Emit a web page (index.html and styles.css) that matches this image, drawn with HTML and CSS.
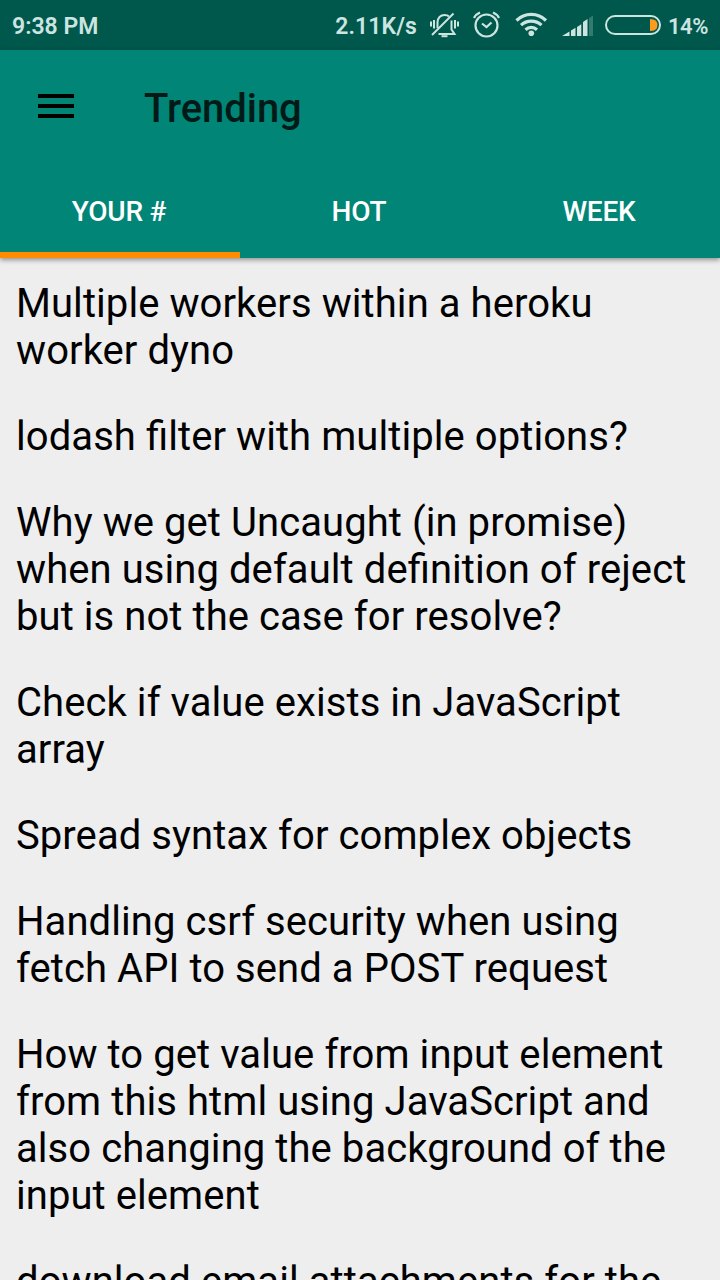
FILE: index.html
```html
<!DOCTYPE html>
<html lang="en">
<head>
<meta charset="utf-8">
<title>Trending</title>
<link rel="stylesheet" href="styles.css">
</head>
<body>
<div class="screen">
  <div class="status">
    <span class="clock">9:38 PM</span>
    <div class="indicators">
      <span class="speed">2.11K/s</span>
      <svg class="bell" width="32" height="30" viewBox="428 10 32 30" fill="none" stroke="currentColor" stroke-width="2">
        <path d="M431 21.500v5M434 20v8.500M455 20v8.500M458 21.500v5"/>
        <path d="M437.500 28V22.500c0-4.500 3-7.500 7-7.500 2 0 3.500.5 4.500 1.500M451.500 20.500v9l3 4.500H438.500"/>
        <path d="M432 35L453.500 13.500"/>
        <path d="M441.500 36.200h6"/>
      </svg>
      <svg class="alarm" width="28" height="30" viewBox="473 10 28 30" fill="none" stroke="currentColor" stroke-width="2.200">
        <circle cx="486.500" cy="25.500" r="11"/>
        <path d="M482 23.500l4.500 3.500 5-4.500M474 18q1.500-3.500 6-5.500M493 12.500q4.500 2 6 5.500"/>
      </svg>
      <svg class="wifi" width="34" height="26" viewBox="514 12 34 26" fill="none" stroke="currentColor" stroke-width="3.200">
        <path d="M516.500 20.500a21 21 0 0 1 29.500 0M521 25.200a15 15 0 0 1 20.500 0M525.500 29.700a8.500 8.500 0 0 1 11.500 0"/>
        <circle cx="531.300" cy="33.300" r="2.800" fill="currentColor" stroke="none"/>
      </svg>
      <svg class="signal" width="32" height="22" viewBox="561 15 32 22" fill="currentColor">
        <path d="M562 36l7.500-4.500V36zM571 30.500l4.500-2.700V36H571zM577 27l4.300-2.700V36H577zM583 22l4.500-3v17H583z"/>
        <path d="M589 18l4-2.500V36h-4z" opacity=".25"/>
      </svg>
      <svg class="battery" width="58" height="22" viewBox="604 14 58 22">
        <rect x="606" y="16" width="54" height="18" rx="9" fill="none" stroke="currentColor" stroke-width="2"/>
        <path d="M650 19q7.500 0 7.500 6t-7.500 6z" fill="#ff9a1c"/>
      </svg>
      <span class="percent">14%</span>
    </div>
  </div>
  <header class="appbar">
    <div class="toolbar">
      <svg class="menu" width="36" height="24" viewBox="0 0 36 24"><path d="M0 0h36v4H0zM0 10h36v4H0zM0 20h36v4H0z"/></svg>
      <h1 class="title">Trending</h1>
    </div>
    <nav class="tabs">
      <div class="tab active">YOUR #</div>
      <div class="tab">HOT</div>
      <div class="tab">WEEK</div>
    </nav>
  </header>
  <main class="list">
    <div class="item">Multiple workers within a heroku<br>worker dyno</div>
    <div class="item">lodash filter with multiple options?</div>
    <div class="item">Why we get Uncaught (in promise)<br>when using default definition of reject<br>but is not the case for resolve?</div>
    <div class="item">Check if value exists in JavaScript<br>array</div>
    <div class="item">Spread syntax for complex objects</div>
    <div class="item">Handling csrf security when using<br>fetch API to send a POST request</div>
    <div class="item">How to get value from input element<br>from this html using JavaScript and<br>also changing the background of the<br>input element</div>
    <div class="item">download email attachments for the</div>
  </main>
</div>
</body>
</html>
```
FILE: styles.css
```css
* { box-sizing: border-box; }
body { margin: 0; font-family: Roboto, sans-serif; background: #eee; }
svg { display: block; flex: none; }
.screen { height: 1280px; overflow: hidden; display: flex; flex-direction: column; }
.status {
  flex: none; height: 50px; padding: 2px 13px 0 12px; background: #00574b; color: #cce5e0;
  display: flex; justify-content: space-between; align-items: center;
  font-size: 23px; font-weight: 600; white-space: nowrap;
}
.indicators { display: flex; align-items: center; height: 48px; }
.speed { letter-spacing: .1px; }
.bell { margin-left: 11px; margin-top: -2px; }
.alarm { margin-left: 13px; margin-top: -2px; }
.wifi { margin-left: 13px; margin-top: -2px; }
.signal { margin-left: 13px; }
.battery { margin-left: 11px; margin-top: -2px; }
.percent { width: 39px; margin-left: 6px; font-size: 22px; letter-spacing: -.5px; }
.appbar {
  flex: none; height: 208px; background: #008577; z-index: 1;
  box-shadow: 0 2px 5px rgba(0, 0, 0, .4);
}
.toolbar { height: 112px; padding-left: 38px; display: flex; align-items: center; }
.title { margin: 5px 0 0 70px; font-size: 40px; line-height: 48px; font-weight: 500; letter-spacing: -.05px; color: #001a17; }
.tabs { display: grid; grid-template-columns: repeat(3, 1fr); height: 96px; }
.tab {
  display: flex; align-items: center; justify-content: center; padding: 8px 2px 0 0;
  border-bottom: 6px solid transparent; color: #fff; font-size: 28px; font-weight: 500;
  letter-spacing: -.2px;
}
.active { border-bottom-color: #ff8c00; }
.list { padding: 22px 16px 0; display: flex; flex-direction: column; gap: 39px; }
.item {
  font-size: 40px; line-height: 47px; letter-spacing: .07px; color: #000; white-space: nowrap;
  font-feature-settings: "liga" 1;
}
```
